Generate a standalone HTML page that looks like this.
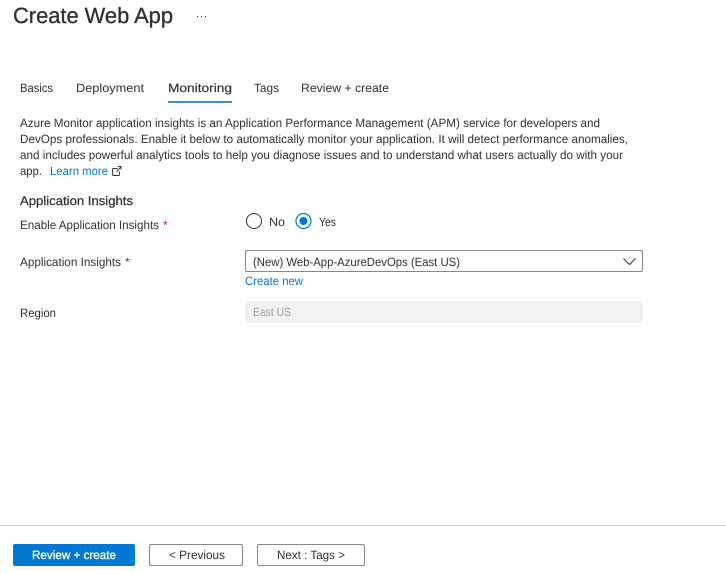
<!DOCTYPE html>
<html lang="en">
<head>
<meta charset="utf-8">
<title>Create Web App</title>
<style>
html,body{margin:0;padding:0;background:#fff;width:726px;height:573px;overflow:hidden}
svg{display:block}
text{font-family:"Liberation Sans",sans-serif;font-size:12px;fill:#323130;text-rendering:geometricPrecision}
</style>
</head>
<body>
<svg width="726" height="573" viewBox="0 0 726 573" xmlns="http://www.w3.org/2000/svg">
<rect width="726" height="573" fill="#fff"/>

<text x="13" y="23" style="font-size:22px;stroke:#323130;stroke-width:.35" textLength="160" lengthAdjust="spacingAndGlyphs">Create Web App</text>
<circle cx="197.500" cy="16.500" r=".6" fill="#323130"/>
<circle cx="201.500" cy="16.500" r=".6" fill="#323130"/>
<circle cx="205.500" cy="16.500" r=".6" fill="#323130"/>

<text x="20" y="92" textLength="33" lengthAdjust="spacingAndGlyphs">Basics</text>
<text x="76" y="92" textLength="68" lengthAdjust="spacingAndGlyphs">Deployment</text>
<text x="168" y="92" style="stroke:#323130;stroke-width:.2" textLength="64" lengthAdjust="spacingAndGlyphs">Monitoring</text>
<text x="254" y="92" textLength="25" lengthAdjust="spacingAndGlyphs">Tags</text>
<text x="301" y="92" textLength="88" lengthAdjust="spacingAndGlyphs">Review + create</text>
<rect x="168" y="101" width="64" height="2" fill="#3c8fd0"/>

<text x="20" y="127" textLength="580" lengthAdjust="spacingAndGlyphs">Azure Monitor application insights is an Application Performance Management (APM) service for developers and</text>
<text x="20" y="143" textLength="608" lengthAdjust="spacingAndGlyphs">DevOps professionals. Enable it below to automatically monitor your application. It will detect performance anomalies,</text>
<text x="20" y="159" textLength="603" lengthAdjust="spacingAndGlyphs">and includes powerful analytics tools to help you diagnose issues and to understand what users actually do with your</text>
<text x="20" y="175" textLength="22" lengthAdjust="spacingAndGlyphs">app.</text>
<text x="50" y="175" style="fill:#0078d4" textLength="58" lengthAdjust="spacingAndGlyphs">Learn more</text>
<path d="M117.500 168.500h-4a1 1 0 0 0-1 1v5a1 1 0 0 0 1 1h5a1 1 0 0 0 1-1v-3M116.500 171.500l4.500-4.500M118 166.500h3v3" fill="none" stroke="#323130" stroke-width=".9"/>

<text x="20" y="205" style="font-size:12.500px;stroke:#323130;stroke-width:.25" textLength="113" lengthAdjust="spacingAndGlyphs">Application Insights</text>

<text x="20" y="229" textLength="139" lengthAdjust="spacingAndGlyphs">Enable Application Insights</text>
<text x="163" y="229" style="fill:#a4262c">*</text>
<circle cx="254" cy="221" r="7.500" fill="#fff" stroke="#323130" stroke-width="1"/>
<text x="269" y="226" textLength="16" lengthAdjust="spacingAndGlyphs">No</text>
<circle cx="303.500" cy="221" r="7.500" fill="#fff" stroke="#0078d4" stroke-width="1.200"/>
<circle cx="303.500" cy="221" r="4" fill="#0078d4"/>
<text x="319" y="226" textLength="17" lengthAdjust="spacingAndGlyphs">Yes</text>

<text x="20" y="266" textLength="101" lengthAdjust="spacingAndGlyphs">Application Insights</text>
<text x="125" y="266" style="fill:#a4262c">*</text>
<rect x="245.500" y="250.500" width="397" height="21" rx="1.500" fill="#fff" stroke="#8a8886"/>
<text x="253" y="266" textLength="207" lengthAdjust="spacingAndGlyphs">(New) Web-App-AzureDevOps (East US)</text>
<path d="M623.500 258.500l6 6 6-6" fill="none" stroke="#323130" stroke-width="1"/>
<text x="245" y="285" style="fill:#0078d4" textLength="58" lengthAdjust="spacingAndGlyphs">Create new</text>

<text x="20" y="317" textLength="36" lengthAdjust="spacingAndGlyphs">Region</text>
<rect x="245" y="301" width="398" height="22" rx="2" fill="#f3f2f1"/>
<text x="253" y="316" style="fill:#a19f9d" textLength="38" lengthAdjust="spacingAndGlyphs">East US</text>

<rect x="0" y="525" width="726" height="1" fill="#c8c6c4"/>

<rect x="13" y="544" width="122" height="22" rx="2" fill="#0078d4"/>
<text x="32" y="559" style="fill:#fff;stroke:#fff;stroke-width:.3" textLength="84" lengthAdjust="spacingAndGlyphs">Review + create</text>
<rect x="149.500" y="544.500" width="93" height="21" rx="1.500" fill="#fff" stroke="#8a8886"/>
<text x="169" y="559" textLength="56" lengthAdjust="spacingAndGlyphs">&lt; Previous</text>
<rect x="257.500" y="544.500" width="107" height="21" rx="1.500" fill="#fff" stroke="#8a8886"/>
<text x="277" y="559" textLength="68" lengthAdjust="spacingAndGlyphs">Next : Tags &gt;</text>
</svg>
</body>
</html>
